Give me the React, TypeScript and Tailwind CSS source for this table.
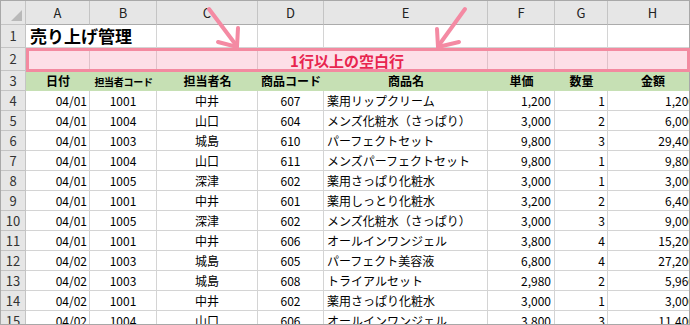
import React from "react";

const rows: [string, string, string, string, string, string, string, string][] = [
  ["04/01", "1001", "中井", "607", "薬用リップクリーム", "1,200", "1", "1,200"],
  ["04/01", "1004", "山口", "604", "メンズ化粧水（さっぱり）", "3,000", "2", "6,000"],
  ["04/01", "1003", "城島", "610", "パーフェクトセット", "9,800", "3", "29,400"],
  ["04/01", "1004", "山口", "611", "メンズパーフェクトセット", "9,800", "1", "9,800"],
  ["04/01", "1005", "深津", "602", "薬用さっぱり化粧水", "3,000", "1", "3,000"],
  ["04/01", "1001", "中井", "601", "薬用しっとり化粧水", "3,200", "2", "6,400"],
  ["04/01", "1005", "深津", "602", "メンズ化粧水（さっぱり）", "3,000", "3", "9,000"],
  ["04/01", "1001", "中井", "606", "オールインワンジェル", "3,800", "4", "15,200"],
  ["04/02", "1003", "城島", "605", "パーフェクト美容液", "6,800", "4", "27,200"],
  ["04/02", "1003", "城島", "608", "トライアルセット", "2,980", "2", "5,960"],
  ["04/02", "1001", "中井", "602", "薬用さっぱり化粧水", "3,000", "1", "3,000"],
  ["04/02", "1004", "山口", "606", "オールインワンジェル", "3,800", "3", "11,400"],
];

const letters = ["A", "B", "C", "D", "E", "F", "G", "H"];

const hdr =
  "flex items-center justify-center bg-[#e6e6e6] border-r border-b border-[#c4c4c4] text-[13px] text-[#222]";
const rowHdr =
  "flex items-center justify-center bg-[#e6e6e6] border-r border-b border-[#c4c4c4] text-[13px] text-[#333]";
const cell = "flex items-center border-r border-b border-[#d4d4d4] text-[12px] text-black whitespace-nowrap overflow-hidden";
const green = "flex items-center justify-center bg-[#c6e0b4] h-[20px] font-bold text-black whitespace-nowrap";

export default function App() {
  return (
    <div className="relative w-[690px] h-[325px] bg-white font-['Noto_Sans_CJK_JP',sans-serif]">
      <div className="w-[690px] h-[325px] overflow-hidden border border-[#a8a8a8]">
        <div className="grid w-max grid-cols-[25px_64px_67px_101px_66px_164px_67px_53px_90px]">
          {/* column header row */}
          <div className="relative h-[24px] bg-[#e6e6e6] border-r border-b border-[#c4c4c4]">
            <svg width="25" height="24" className="absolute left-0 top-0">
              <polygon points="21,9 21,20 10,20" fill="#b9b9b9" />
            </svg>
          </div>
          {letters.map((l) => (
            <div key={l} className={`${hdr} h-[24px] border-b-[#ababab]`}>
              {l}
            </div>
          ))}

          {/* row 1 */}
          <div className={`${rowHdr} h-[23px]`}>1</div>
          <div className="col-span-2 flex items-center h-[23px] border-r border-b border-[#d4d4d4] pl-[4px] text-[17px] font-bold text-black whitespace-nowrap">
            売り上げ管理
          </div>
          {[0, 1, 2, 3, 4, 5].map((i) => (
            <div key={i} className={`${cell} h-[23px]`} />
          ))}

          {/* row 2 */}
          <div className={`${rowHdr} h-[23px]`}>2</div>
          <div className={`${cell} h-[23px]`} />
          <div className={`${cell} h-[23px]`} />
          <div className={`${cell} h-[23px]`} />
          <div className={`${cell} h-[23px] col-span-2`} />
          <div className={`${cell} h-[23px]`} />
          <div className={`${cell} h-[23px]`} />
          <div className={`${cell} h-[23px]`} />

          {/* row 3 */}
          <div className={`${rowHdr} h-[20px]`}>3</div>
          <div className={`${green} text-[12px]`}>日付</div>
          <div className={`${green} text-[10px] tracking-[-0.3px]`}>担当者コード</div>
          <div className={`${green} text-[12px]`}>担当者名</div>
          <div className={`${green} text-[12px]`}>商品コード</div>
          <div className={`${green} text-[12px]`}>商品名</div>
          <div className={`${green} text-[12px]`}>単価</div>
          <div className={`${green} text-[12px]`}>数量</div>
          <div className={`${green} text-[12px]`}>金額</div>

          {rows.map((r, idx) => (
            <React.Fragment key={idx}>
              <div className={`${rowHdr} h-[20px]`}>{idx + 4}</div>
              <div className={`${cell} h-[20px] justify-end pr-[2px]`}>{r[0]}</div>
              <div className={`${cell} h-[20px] justify-center`}>{r[1]}</div>
              <div className={`${cell} h-[20px] justify-center`}>{r[2]}</div>
              <div className={`${cell} h-[20px] justify-center`}>{r[3]}</div>
              <div className={`${cell} h-[20px] justify-start pl-[3px]`}>{r[4]}</div>
              <div className={`${cell} h-[20px] justify-end pr-[3px]`}>{r[5]}</div>
              <div className={`${cell} h-[20px] justify-end pr-[2px]`}>{r[6]}</div>
              <div className={`${cell} h-[20px] justify-end pr-[2px]`}>{r[7]}</div>
            </React.Fragment>
          ))}
        </div>
      </div>

      {/* annotation: highlighted empty row */}
      <div className="absolute left-[26px] top-[48px] w-[664px] h-[24px] border-[3px] border-[#f38aa0] bg-[rgba(248,150,175,0.3)] flex items-center justify-center pr-[22px]">
        <span className="text-[15px] font-bold text-[#e8254f] leading-none">1行以上の空白行</span>
      </div>

      {/* annotation arrows */}
      <svg className="absolute left-0 top-0 pointer-events-none" width="690" height="325">
        <g stroke="#f48aa3" strokeWidth="4" fill="none" strokeLinecap="round" strokeLinejoin="miter">
          <line x1="209" y1="9" x2="236" y2="45" />
          <polyline points="218,42 237,47 238,28" />
          <line x1="465" y1="9" x2="439" y2="45" />
          <polyline points="437,29 438,47 459,42" />
        </g>
      </svg>
    </div>
  );
}
